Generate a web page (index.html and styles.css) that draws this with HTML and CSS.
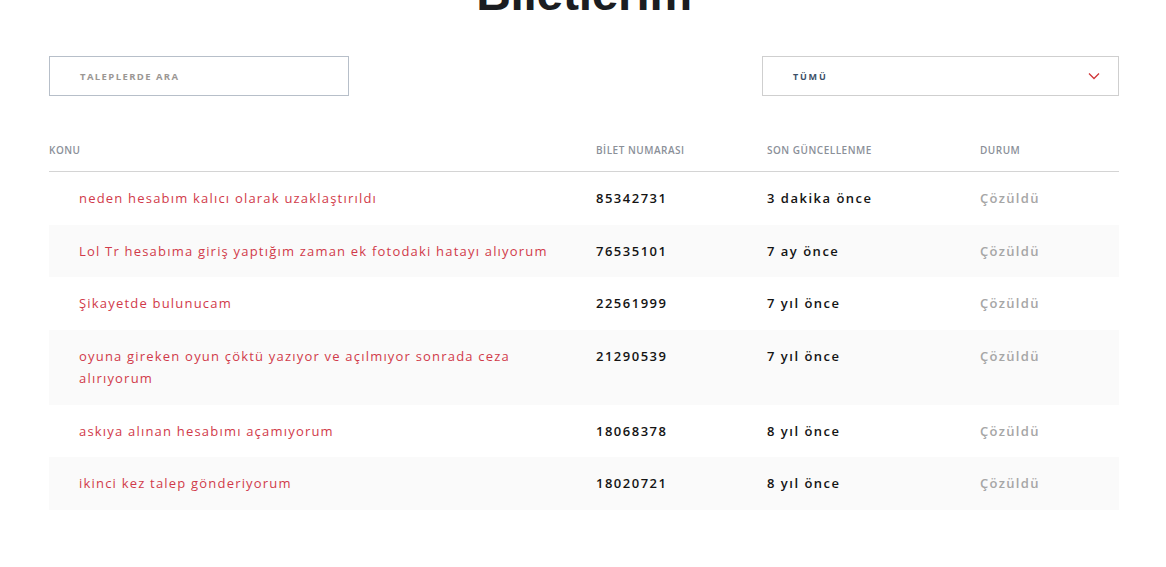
FILE: index.html
```html
<!DOCTYPE html>
<html lang="tr">
<head>
<meta charset="utf-8">
<title>Biletlerim</title>
<link rel="stylesheet" href="styles.css">
</head>
<body>
<main class="page">
  <h1 class="title">Biletlerim</h1>
  <div class="filters">
    <div class="search"><span class="placeholder">TALEPLERDE ARA</span></div>
    <div class="select">
      <span class="select-label">TÜMÜ</span>
      <svg class="chevron" width="12" height="8" viewBox="0 0 12 8"><polyline points="1,1.5 6,6.5 11,1.5" fill="none" stroke="#d13639" stroke-width="1.3"/></svg>
    </div>
  </div>
  <div class="table">
    <div class="row head">
      <div class="cell h">KONU</div>
      <div class="cell h">BİLET NUMARASI</div>
      <div class="cell h">SON GÜNCELLENME</div>
      <div class="cell h">DURUM</div>
    </div>
    <div class="row">
      <div class="cell subject">neden hesabım kalıcı olarak uzaklaştırıldı</div>
      <div class="cell num">85342731</div>
      <div class="cell num">3 dakika önce</div>
      <div class="cell status">Çözüldü</div>
    </div>
    <div class="row alt">
      <div class="cell subject">Lol Tr hesabıma giriş yaptığım zaman ek fotodaki hatayı alıyorum</div>
      <div class="cell num">76535101</div>
      <div class="cell num">7 ay önce</div>
      <div class="cell status">Çözüldü</div>
    </div>
    <div class="row">
      <div class="cell subject">Şikayetde bulunucam</div>
      <div class="cell num">22561999</div>
      <div class="cell num">7 yıl önce</div>
      <div class="cell status">Çözüldü</div>
    </div>
    <div class="row alt">
      <div class="cell subject">oyuna gireken oyun çöktü yazıyor ve açılmıyor sonrada ceza alırıyorum</div>
      <div class="cell num">21290539</div>
      <div class="cell num">7 yıl önce</div>
      <div class="cell status">Çözüldü</div>
    </div>
    <div class="row">
      <div class="cell subject">askıya alınan hesabımı açamıyorum</div>
      <div class="cell num">18068378</div>
      <div class="cell num">8 yıl önce</div>
      <div class="cell status">Çözüldü</div>
    </div>
    <div class="row alt">
      <div class="cell subject">ikinci kez talep gönderiyorum</div>
      <div class="cell num">18020721</div>
      <div class="cell num">8 yıl önce</div>
      <div class="cell status">Çözüldü</div>
    </div>
  </div>
</main>
</body>
</html>
```

FILE: styles.css
```css
html, body {
  margin: 0;
  padding: 0;
  background: #fff;
}
body {
  font-family: "Open Sans", "Liberation Sans", sans-serif;
  color: #111;
}
.page {
  width: 1070px;
  margin-left: 49px;
}
.title {
  margin: -30px 0 38px;
  font-family: "Liberation Sans", Arial, sans-serif;
  font-weight: 700;
  font-size: 48px;
  line-height: 48px;
  text-align: center;
  color: #1b1d21;
  letter-spacing: -0.3px;
}
.filters {
  display: flex;
  justify-content: space-between;
}
.search {
  box-sizing: border-box;
  width: 300px;
  height: 40px;
  border: 1px solid #b7bfc9;
  display: flex;
  align-items: center;
  padding-left: 30px;
}
.placeholder {
  font-size: 9.5px;
  font-weight: 700;
  letter-spacing: 1.4px;
  color: #9b9794;
}
.select {
  box-sizing: border-box;
  width: 357px;
  height: 40px;
  border: 1px solid #cfcfcf;
  display: flex;
  align-items: center;
  justify-content: space-between;
  padding: 0 18px 0 30px;
}
.select-label {
  font-size: 9px;
  font-weight: 700;
  letter-spacing: 1.8px;
  color: #3c5068;
}
.chevron {
  display: block;
}
.table {
  margin-top: 34px;
}
.row {
  display: grid;
  grid-template-columns: 547px 171px 213px 1fr;
}
.row.alt {
  background: #fafafa;
}
.row.head {
  border-bottom: 1px solid #d4d4d4;
}
.cell {
  padding: 15px 0;
  font-size: 13px;
  line-height: 22.5px;
}
.cell.h {
  padding: 13px 0 14px;
  font-size: 10px;
  line-height: 14px;
  font-weight: 600;
  letter-spacing: 0.5px;
  color: #8b9099;
}
.subject {
  padding-left: 30px;
  padding-right: 30px;
  color: #d13a4a;
  letter-spacing: 1.2px;
}
.num {
  font-weight: 600;
  color: #141414;
  letter-spacing: 1.5px;
}
.status {
  font-weight: 600;
  color: #a6a6a6;
  letter-spacing: 1.3px;
}
```
